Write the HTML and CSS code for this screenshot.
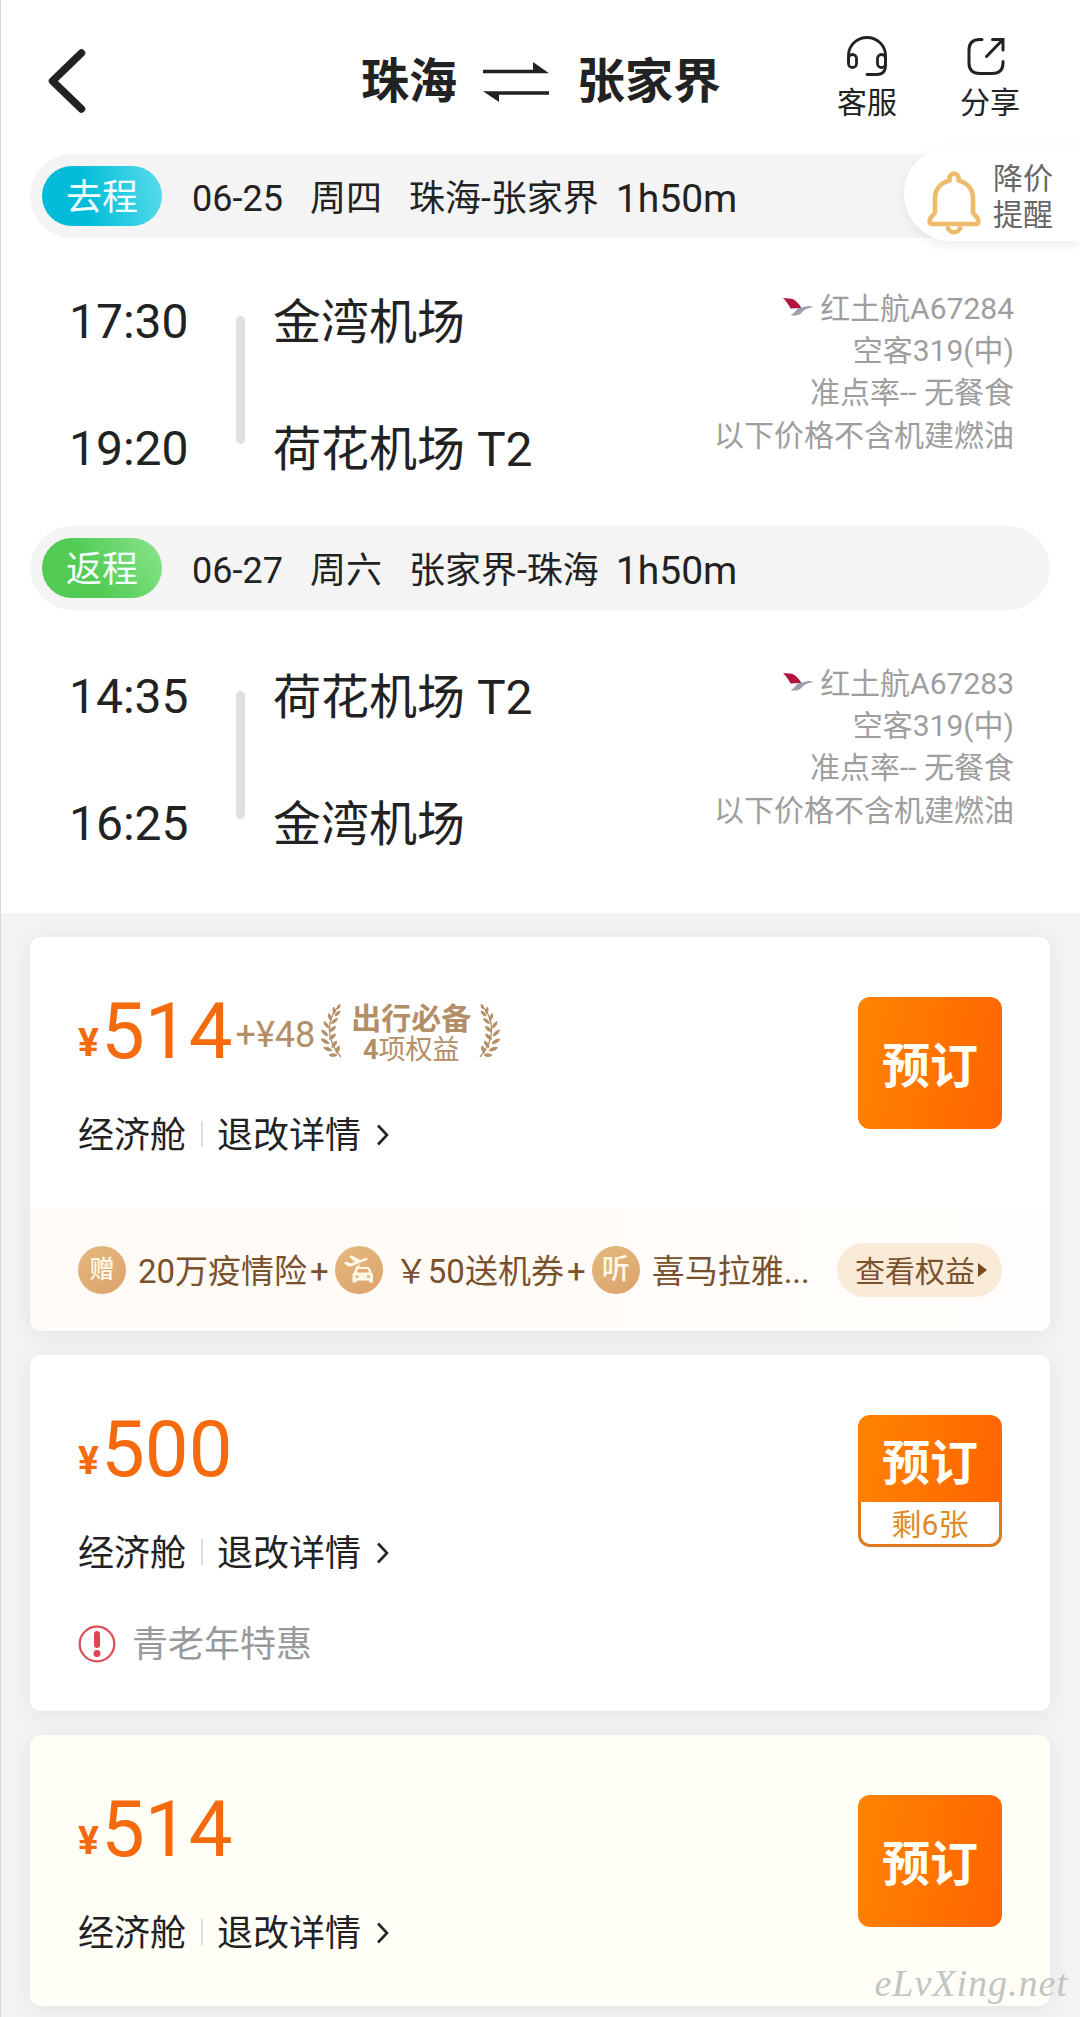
FILE: index.html
```html
<!DOCTYPE html>
<html lang="zh-CN">
<head>
<meta charset="utf-8">
<title>珠海 ⇌ 张家界</title>
<link rel="stylesheet" href="styles.css">
</head>
<body>
<svg class="defs" aria-hidden="true">
  <symbol id="laurel" viewBox="0 0 23 54">
    <path d="M18 3C8 14 4 34 21 53" fill="none" stroke="currentColor" stroke-width="1.300"/>
    <g fill="currentColor" stroke="currentColor" stroke-width=".9" stroke-linejoin="round">
      <path d="M18 5c-1-2 0-4 1.500-5 1 2 .5 4-1.500 5z"/>
      <path d="M14.500 9.500c-2-2-2-4-1-6.500 2 2 2.300 4 1 6.500z"/>
      <path d="M15 12c.5-3 2-4.500 5-5-.5 3-2 4.500-5 5z"/>
      <path d="M11 16.500c-2.500-1.800-3-4-2.300-7 2.300 2 3 4.200 2.300 7z"/>
      <path d="M11.500 19.500c.7-3 2.500-4.600 6-5-.8 3-2.700 4.700-6 5z"/>
      <path d="M8.500 24c-3-1-4.500-3.300-4.500-6.500 3 1.300 4.500 3.500 4.500 6.500z"/>
      <path d="M9.500 27.500c.7-3.200 2.800-4.800 6.200-5-.7 3.200-2.800 4.900-6.200 5z"/>
      <path d="M8 32c-3.500-.5-5.700-2.500-6.500-6 3.600.7 5.700 2.700 6.500 6z"/>
      <path d="M9.500 35.500c.5-3.200 2.500-5 6-5.500-.5 3.300-2.500 5.200-6 5.500z"/>
      <path d="M9 39.500c-3.600.4-6.300-1.200-8-4.500 3.700-.3 6.400 1.200 8 4.500z"/>
      <path d="M12 43.500c-.2-3.300 1.300-5.500 4.500-6.500.4 3.200-1.200 5.400-4.500 6.500z"/>
      <path d="M12 46.500c-3.300 1-6.200 0-8.500-2.800 3.500-1 6.300-.1 8.500 2.800z"/>
      <path d="M16.500 49c-1-3-.2-5.500 2.500-7.200 1.200 3 .4 5.500-2.500 7.200z"/>
      <path d="M17 51c-2.500 2-5.200 2-8 .2 2.800-1.900 5.500-2 8-.2z"/>
    </g>
  </symbol>
  <symbol id="bird" viewBox="0 0 30 18">
    <path d="M0 0l9 .8c4 1.700 7 5 9.500 9.200L7.500 10.500C5.500 6.500 3 3 0 0z" fill="#b5123d"/>
    <path d="M7.500 17c4-1.500 5-4.500 7.500-6.500 3-1.500 5-.8 8-2 2-.8 5-.8 7 .5-2.500.7-4 1.200-6 1.700-4 .8-5 5.300-9 6.300-3 .8-5.500.8-7.500 0z" fill="#9aa0ad"/>
  </symbol>
  <symbol id="chevron" viewBox="0 0 13 22">
    <path d="M2 1.500L11 11 2 20.500" fill="none" stroke="#222" stroke-width="2.600"/>
  </symbol>
</svg>

<main class="page">
  <header class="header">
    <svg class="back" viewBox="0 0 38 64"><path d="M33.500 4L4.500 32l29 28" fill="none" stroke="#222" stroke-width="7.500" stroke-linecap="round" stroke-linejoin="round"/></svg>
    <h1 class="title">
      <span>珠海</span>
      <svg class="swap" viewBox="0 0 66 40" fill="#222"><path d="M0 7.700h50V0l16 11.300H0zM66 32.700H16V40L0 29.200h66z"/></svg>
      <span>张家界</span>
    </h1>
    <nav class="actions">
      <a class="action">
        <svg viewBox="0 0 40 40" fill="none" stroke="#222" stroke-width="2.800" stroke-linecap="round"><path d="M1.500 25V19.500a18.500 18 0 0 1 37 0V29c0 6-3 9.500-8.500 9.500H20"/><rect x="1.500" y="18.500" width="8" height="13" rx="4"/><rect x="30.500" y="18.500" width="8" height="13" rx="4"/></svg>
        <span>客服</span>
      </a>
      <a class="action action-share">
        <svg viewBox="0 0 40 40" fill="none" stroke="#222" stroke-width="3" stroke-linecap="round"><path d="M16 3.500h-2C6.500 3.500 3 7 3 14v13c0 7 3.500 10.500 11 10.500h12c7.500 0 11-3.500 11-10.500v-1.500M26.500 3.500H37V14M36.500 4L20.500 20.500"/></svg>
        <span>分享</span>
      </a>
    </nav>
  </header>

  <section class="trip">
    <div class="trip-bar">
      <span class="tag tag-go">去程</span>
      <span>06-25</span><span>周四</span><span>珠海-张家界</span><span class="duration">1h50m</span>
    </div>
    <div class="flight">
      <div class="times"><span>17:30</span><span>19:20</span></div>
      <i class="track"></i>
      <div class="stations"><span>金湾机场</span><span>荷花机场 T2</span></div>
      <div class="info">
        <span><svg class="bird"><use href="#bird"/></svg>红土航A67284</span>
        <span>空客319(中)</span>
        <span>准点率-- 无餐食</span>
        <span>以下价格不含机建燃油</span>
      </div>
    </div>
  </section>

  <section class="trip trip-return">
    <div class="trip-bar">
      <span class="tag tag-back">返程</span>
      <span>06-27</span><span>周六</span><span>张家界-珠海</span><span class="duration">1h50m</span>
    </div>
    <div class="flight">
      <div class="times"><span>14:35</span><span>16:25</span></div>
      <i class="track"></i>
      <div class="stations"><span>荷花机场 T2</span><span>金湾机场</span></div>
      <div class="info">
        <span><svg class="bird"><use href="#bird"/></svg>红土航A67283</span>
        <span>空客319(中)</span>
        <span>准点率-- 无餐食</span>
        <span>以下价格不含机建燃油</span>
      </div>
    </div>
  </section>

  <aside class="alert">
    <svg viewBox="0 0 54 64" fill="none" stroke="#eebb6c" stroke-width="4.600" stroke-linejoin="round"><path d="M22.500 9.500V7.500c0-6.500 9-6.500 9 0v2c9.500 2.500 14.500 9.500 14.500 18v14c1 2.500 5 4 5.500 8.500 0 2-1 3-3 3h-43c-2 0-3-1-3-3C3 45.500 7 44 8 41.500v-14c0-8.500 5-15.500 14.500-18z"/><path d="M20.500 55.500c1 7.500 12 7.500 13 0"/></svg>
    <span>降价<br>提醒</span>
  </aside>

  <section class="fares">
    <article class="card card-plus">
      <div class="card-body">
        <div class="fare">
          <div class="price">
            <span class="yen">¥</span><span class="amount">514</span><span class="extra">+¥48</span>
            <div class="badge">
              <svg><use href="#laurel"/></svg>
              <div class="badge-text"><strong>出行必备</strong><span><b>4</b>项权益</span></div>
              <svg class="flip"><use href="#laurel"/></svg>
            </div>
          </div>
          <div class="cabin"><span>经济舱</span><i></i><span>退改详情</span><svg><use href="#chevron"/></svg></div>
        </div>
        <button class="book">预订</button>
      </div>
      <div class="benefits">
        <i class="coin">赠</i><span>20万疫情险<em>+</em></span>
        <i class="coin"><svg viewBox="0 0 30 30" fill="#fff8e8"><path d="M0 7.500l3-.8 3.500 1.800 4.500-1.500L5 1.500 8 .5l8.500 4.500L21.500 3c2-.6 3 1.200 1 2.300L7 11.500c-3 .5-5.500-2-7-4zM11 12.500l5-3.200-1.500 5z"/><path d="M13.500 12h10.500c1 0 1.700.7 2 1.500l1.500 4 1.500 1.500v8.500h-4V25.500H12.500v2h-4V19l1.500-1.500 1.500-4c.3-.8 1-1.500 2-1.500z"/><path d="M14 14h10l1 3.500H13zM11.500 20.500h3v2.300h-3zM23 20.500h3v2.300h-3z" fill="#dfaa6c"/></svg></i><span>￥50送机券<em>+</em></span>
        <i class="coin coin-listen">听</i><span>喜马拉雅...</span>
        <a class="more"><span>查看权益</span><i></i></a>
      </div>
    </article>

    <article class="card card-senior">
      <div class="card-body">
        <div class="fare">
          <div class="price"><span class="yen">¥</span><span class="amount">500</span></div>
          <div class="cabin"><span>经济舱</span><i></i><span>退改详情</span><svg><use href="#chevron"/></svg></div>
          <div class="notice">
            <svg viewBox="0 0 38 38"><circle cx="19" cy="19" r="17.300" fill="none" stroke="#d8525c" stroke-width="2.300"/><path d="M19 9v11" stroke="#e0444e" stroke-width="6" stroke-linecap="round"/><circle cx="19" cy="28.500" r="3.500" fill="#e0444e"/></svg>
            <span>青老年特惠</span>
          </div>
        </div>
        <button class="book book-left"><span>预订</span><small>剩6张</small></button>
      </div>
    </article>

    <article class="card card-cream">
      <div class="card-body">
        <div class="fare">
          <div class="price"><span class="yen">¥</span><span class="amount">514</span></div>
          <div class="cabin"><span>经济舱</span><i></i><span>退改详情</span><svg><use href="#chevron"/></svg></div>
        </div>
        <button class="book">预订</button>
      </div>
    </article>
  </section>
  <div class="watermark">eLvXing.net</div>
</main>
</body>
</html>
```
FILE: styles.css
```css
* { box-sizing: border-box; }
body {
  margin: 0;
  background: #fff;
  color: #222;
  font-family: Roboto, "Noto Sans CJK SC", sans-serif;
}
i, em { font-style: normal; }
svg { display: block; flex: none; }
.defs { position: absolute; width: 0; height: 0; }
.page {
  position: relative;
  width: 1080px;
  height: 2017px;
  overflow: hidden;
}
.page::before {
  content: "";
  position: absolute;
  z-index: 2;
  left: 0;
  top: 0;
  bottom: 0;
  width: 1px;
  background: #d9d9d9;
}

/* header */
.header {
  display: grid;
  grid-template-columns: 313px 476px 1fr;
  height: 154px;
  padding-left: 48px;
}
.back { width: 38px; height: 64px; margin-top: 49px; }
.title {
  display: flex;
  align-items: center;
  height: 48px;
  margin: 58px 0 0;
  font-size: 48px;
  line-height: 48px;
  font-weight: 700;
}
.swap { width: 66px; height: 40px; margin: 0 28px 0 26px; }
.actions { display: flex; gap: 63px; padding-top: 36px; }
.action {
  display: flex;
  flex-direction: column;
  align-items: center;
  width: 60px;
  font-size: 30px;
  line-height: 36px;
}
.action svg { width: 40px; height: 40px; margin-bottom: 9px; }
.action-share svg { margin-left: -8px; }

/* trips */
.trip { height: 372px; }
.trip-return { height: 387px; }
.trip-bar {
  display: flex;
  align-items: center;
  gap: 27px;
  height: 84px;
  margin: 0 30px;
  padding-left: 12px;
  border-radius: 42px;
  background: #f4f4f4;
  font-size: 36px;
  line-height: 90px;
}
.tag {
  width: 120px;
  height: 60px;
  margin-right: 3px;
  border-radius: 30px;
  color: #f4ffff;
  line-height: 64px;
  text-align: center;
}
.tag-go { background: linear-gradient(80deg, #00bcd8 35%, #5adcec); }
.tag-back { background: linear-gradient(60deg, #52cb55 40%, #8be58d); }
.trip-bar > span:not(.tag) { padding-top: 5px; line-height: 84px; }
.duration { margin-left: -10px; font-size: 39px; }
.flight {
  display: flex;
  padding: 54px 66px 0 69px;
}
.trip-return .flight { padding-top: 57px; }
.times, .stations {
  display: flex;
  flex-direction: column;
  gap: 67px;
  font-size: 48px;
  line-height: 60px;
}
.times { width: 167px; }
.stations { padding-top: 1px; }
.track {
  width: 9px;
  height: 128px;
  margin: 24px 28px 0 0;
  border-radius: 5px;
  background: #e0e0e0;
}
.info {
  display: flex;
  flex-direction: column;
  align-items: flex-end;
  margin-left: auto;
  margin-top: -4px;
  color: #9e9e9e;
  font-size: 30px;
  line-height: 42.2px;
}
.info span { display: flex; }
.bird { width: 30px; height: 18px; margin: 10px 7px 0 0; }

/* floating price alert */
.alert {
  position: absolute;
  right: 0;
  top: 146px;
  display: flex;
  width: 176px;
  height: 95px;
  padding: 15px 0 0 23px;
  border-radius: 48px 0 0 48px;
  background: #fff;
  box-shadow: 0 4px 12px rgba(0, 0, 0, .07);
  color: #666;
  font-size: 30px;
  line-height: 36px;
}
.alert svg { width: 54px; height: 64px; margin: 10px 12px 0 0; }

/* fares */
.fares {
  display: flex;
  flex-direction: column;
  gap: 24px;
  height: 1104px;
  padding: 24px 30px 0;
  background: #f3f3f3;
}
.card {
  flex: none;
  overflow: hidden;
  border-radius: 11px;
  background: #fff;
  box-shadow: 0 3px 22px rgba(0, 0, 0, .07);
}
.card-plus { height: 394px; }
.card-senior { height: 356px; }
.card-cream { height: 271px; background: #fffff8; }
.card-body {
  display: flex;
  justify-content: space-between;
  height: 271px;
  padding: 60px 48px 0;
}
.price {
  display: flex;
  align-items: flex-start;
  height: 90px;
  color: #f56a0c;
}
.yen { width: 23px; padding-top: 14px; font-size: 39px; line-height: 64px; font-weight: 700; }
.amount { font-size: 78px; line-height: 70px; }
.extra {
  margin: -10px 0 0 3px;
  color: #b38e66;
  font-size: 36px;
  line-height: 96px;
}
.badge {
  display: flex;
  margin: 7px 0 0 5px;
  color: #b38e66;
}
.badge svg { width: 23px; height: 54px; }
.badge .flip { transform: scaleX(-1); }
.badge-text {
  display: flex;
  flex-direction: column;
  width: 120px;
  margin: -2px 7px 0 8px;
  text-align: center;
  font-size: 27px;
  line-height: 29px;
}
.badge-text strong { font-size: 30px; line-height: 34px; }
.cabin {
  display: flex;
  align-items: center;
  height: 44px;
  margin-top: 26px;
  font-size: 36px;
  line-height: 44px;
}
.cabin span { padding-top: 2px; }
.cabin i { width: 2px; height: 26px; margin: -3px 14px 0 15px; background: #dcdcdc; }
.cabin svg { width: 13px; height: 22px; margin-left: 15px; }
.notice {
  display: flex;
  align-items: center;
  gap: 16px;
  margin-top: 46px;
  color: #999;
  font-size: 36px;
  line-height: 44px;
}
.notice span { padding-top: 2px; }
.notice svg { width: 38px; height: 38px; }
.book {
  width: 144px;
  height: 132px;
  padding: 7px 0 0;
  border: 0;
  border-radius: 12px;
  background: linear-gradient(100deg, #ff8400, #ff6400);
  color: #fffdf4;
  font: 700 48px/60px Roboto, "Noto Sans CJK SC", sans-serif;
}
.book-left {
  display: flex;
  flex-direction: column;
  padding: 0 3px 3px;
  background: linear-gradient(100deg, #ff8400, #ff6400) 0 0 / 100% 87px no-repeat, #e07a20;
}
.book-left span { width: 138px; height: 87px; line-height: 98px; }
.book-left small {
  width: 138px;
  height: 42px;
  border-radius: 0 0 9px 9px;
  background: #fff;
  color: #e08a28;
  font-size: 30px;
  font-weight: 400;
  line-height: 45px;
}
.benefits {
  display: flex;
  align-items: center;
  height: 123px;
  padding: 0 48px;
  background: linear-gradient(90deg, #fefaf5, #fffdfb);
  color: #7a512d;
  font-size: 33px;
  line-height: 50px;
  white-space: nowrap;
}
.benefits span { padding-top: 4px; }
.benefits em { margin-left: 3px; }
.coin {
  display: flex;
  align-items: center;
  justify-content: center;
  width: 48px;
  height: 48px;
  margin: 0 12px 0 6px;
  border-radius: 50%;
  background: linear-gradient(150deg, #e5ba7e, #dba26b);
  color: #fff8e8;
  font-size: 25px;
  font-weight: 500;
  flex: none;
}
.coin:first-child { margin-left: 0; }
.coin-listen { font-size: 28px; }
.coin svg { width: 30px; height: 30px; }
.more {
  display: flex;
  align-items: center;
  width: 165px;
  height: 54px;
  margin-left: auto;
  padding-left: 18px;
  border-radius: 27px;
  background: #faebd8;
  font-size: 30px;
  flex: none;
}
.more i {
  margin-left: 3px;
  border: 7px solid transparent;
  border-left: 9px solid #7a4a1c;
  border-right: 0;
}
.watermark {
  position: absolute;
  right: 12px;
  bottom: 12px;
  color: #c3c3c3;
  font: italic 38px/44px "Liberation Serif", serif;
  letter-spacing: 1px;
}
```
